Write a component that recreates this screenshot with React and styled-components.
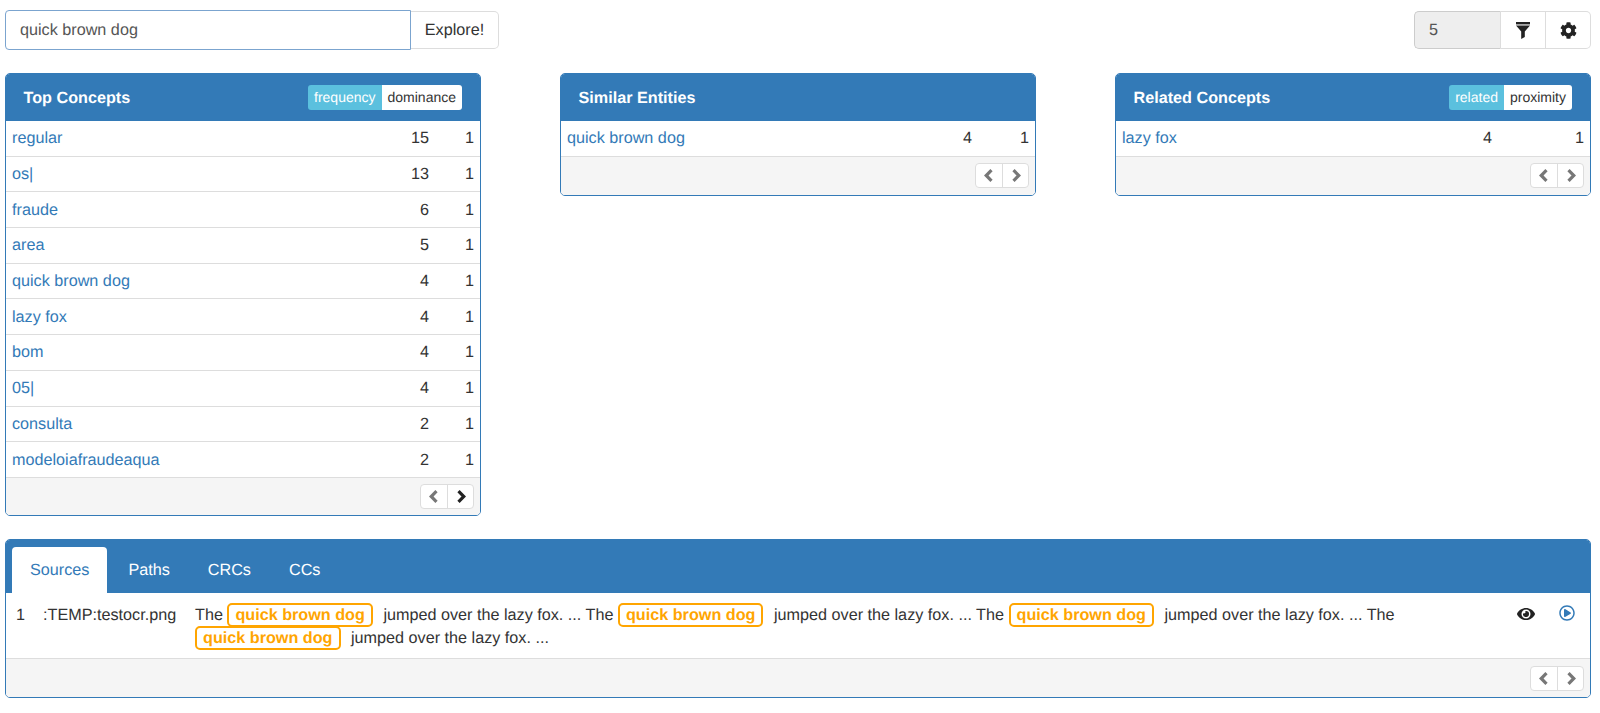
import React from "react";
import styled, { createGlobalStyle } from "styled-components";
import { FaCog, FaEye, FaRegPlayCircle } from "react-icons/fa";

const Global = createGlobalStyle`
  html, body { margin: 0; padding: 0; background: #fff; }
  body {
    font-family: "Liberation Sans", Arial, sans-serif;
    font-size: 16.2px;
    line-height: 23px;
    color: #333;
    text-rendering: geometricPrecision;
  }
  * { box-sizing: border-box; }
`;

const Page = styled.div`
  width: 1600px;
  height: 713px;
  padding: 10px 9px 0 5px;
  overflow: hidden;
`;
const Toolbar = styled.div`
  display: flex;
  justify-content: space-between;
  align-items: center;
  height: 40px;
`;
const SearchGroup = styled.div`
  display: flex;
  align-items: center;
  width: 494px;
`;
const SearchInput = styled.div`
  flex: 1;
  height: 40px;
  border: 1px solid #7ba4cf;
  border-radius: 4px 0 0 4px;
  padding: 8px 14px;
  color: #555;
`;
const GroupBtn = styled.div`
  height: 38px;
  display: flex;
  align-items: center;
  justify-content: center;
  width: ${(p) => p.$w}px;
  border: 1px solid #ddd;
  border-left: 0;
  border-radius: ${(p) => (p.$end ? "0 5px 5px 0" : "0")};
  background: #fff;
  color: #333;
`;
const NumGroup = styled.div`
  display: flex;
  align-items: center;
`;
const NumInput = styled.div`
  width: 87px;
  height: 38px;
  background: #eee;
  border: 1px solid #ccc;
  border-right: 1px solid #ddd;
  border-radius: 5px 0 0 5px;
  padding: 7px 14px;
  color: #555;
`;
const GearIcon = styled(FaCog)`
  font-size: 17px;
  color: #222;
`;
const Columns = styled.div`
  display: grid;
  grid-template-columns: repeat(3, 476px);
  justify-content: space-between;
  align-items: start;
  margin-top: 23px;
  height: 443px;
`;
const Panel = styled.div`
  border: 1px solid #337ab7;
  border-radius: 5px;
  overflow: hidden;
  background: #fff;
`;
const PanelHead = styled.div`
  height: 47px;
  background: #337ab7;
  display: flex;
  align-items: center;
  justify-content: space-between;
  padding: 0 18px 0 17.5px;
`;
const PanelTitle = styled.div`
  color: #fff;
  font-weight: 700;
  padding-top: 1px;
`;
const Toggle = styled.div`
  display: flex;
  height: 25px;
  border-radius: 3px;
  overflow: hidden;
  font-size: 14px;
  line-height: 25px;
`;
const ToggleItem = styled.div`
  padding: 0 6px;
  background: ${(p) => (p.$on ? "#5bc0de" : "#fff")};
  color: ${(p) => (p.$on ? "#fff" : "#333")};
`;
const Row = styled.div`
  display: flex;
  align-items: center;
  height: 35.7px;
  padding: 1px 6px 0;
  border-bottom: 1px solid #ddd;
`;
const Name = styled.a`
  flex: 1;
  color: #337ab7;
`;
const Freq = styled.span`
  text-align: right;
`;
const Dom = styled.span`
  width: ${(p) => p.$w}px;
  text-align: right;
`;
const PanelFoot = styled.div`
  height: ${(p) => p.$h}px;
  background: #f5f5f5;
  display: flex;
  justify-content: flex-end;
  align-items: center;
  padding-right: 6px;
`;
const Pager = styled.div`
  display: flex;
  height: 25px;
  border: 1px solid #ddd;
  border-radius: 4px;
  background: #fff;
`;
const PagerBtn = styled.div`
  width: 26px;
  display: flex;
  align-items: center;
  justify-content: center;
  color: ${(p) => (p.$active ? "#222" : "#777")};
  & + & { border-left: 1px solid #ddd; }
`;
const Bottom = styled(Panel)`
  margin-top: 23px;
`;
const TabBar = styled.div`
  height: 53px;
  background: #337ab7;
  padding: 7px 6px 0;
  display: flex;
`;
const Tab = styled.div`
  height: 46px;
  padding: 12px 18px 0;
  margin-right: ${(p) => (p.$active ? 3 : 2)}px;
  border-radius: 4px 4px 0 0;
  background: ${(p) => (p.$active ? "#fff" : "transparent")};
  color: ${(p) => (p.$active ? "#337ab7" : "#fff")};
`;
const SourceRow = styled.div`
  display: flex;
  height: 66px;
  padding: 11px 0 0 10px;
  border-bottom: 1px solid #ddd;
`;
const Index = styled.div`
  width: 27px;
`;
const File = styled.div`
  width: 152px;
`;
const Snippet = styled.div`
  width: 1210px;
  line-height: 22.7px;
`;
const Highlight = styled.span`
  color: orange;
  font-weight: 700;
  border: 2px solid orange;
  border-radius: 5px;
  padding: 1px 6px;
  margin-right: 6px;
`;
const Actions = styled.div`
  margin-left: auto;
  display: flex;
  gap: 24px;
  padding-right: 15px;
  align-items: flex-start;
  height: 23px;
`;
const IconSlot = styled.span`
  display: flex;
  color: ${(p) => p.$color};
  font-size: ${(p) => p.$size}px;
  margin-top: 1px;
`;

const FilterIcon = () => (
  <svg width="14" height="17" viewBox="0 0 14 17" fill="#222">
    <rect x="0" y="0" width="14" height="2.4" />
    <path d="M0 3.6h14L8.8 9.4V15L5.2 17V9.4z" />
  </svg>
);

const Chevron = ({ right }) => (
  <svg width="10" height="13" viewBox="0 0 10 13" fill="none" stroke="currentColor" strokeWidth="3.2">
    <path d={right ? "M2.5 1.2 7.8 6.5 2.5 11.8" : "M7.5 1.2 2.2 6.5 7.5 11.8"} />
  </svg>
);

const PagerControl = ({ active }) => (
  <Pager>
    <PagerBtn><Chevron /></PagerBtn>
    <PagerBtn $active={active}><Chevron right /></PagerBtn>
  </Pager>
);

const top = [
  ["regular", 15], ["os|", 13], ["fraude", 6], ["area", 5], ["quick brown dog", 4],
  ["lazy fox", 4], ["bom", 4], ["05|", 4], ["consulta", 2], ["modeloiafraudeaqua", 2],
];

const Rows = ({ items, gap }) =>
  items.map(([n, f]) => (
    <Row key={n}>
      <Name>{n}</Name>
      <Freq>{f}</Freq>
      <Dom $w={gap}>1</Dom>
    </Row>
  ));

export default function App() {
  return (
    <Page>
      <Global />
      <Toolbar>
        <SearchGroup>
          <SearchInput>quick brown dog</SearchInput>
          <GroupBtn $w={88} $end>Explore!</GroupBtn>
        </SearchGroup>
        <NumGroup>
          <NumInput>5</NumInput>
          <GroupBtn $w={45}><FilterIcon /></GroupBtn>
          <GroupBtn $w={45} $end><GearIcon /></GroupBtn>
        </NumGroup>
      </Toolbar>
      <Columns>
        <Panel>
          <PanelHead>
            <PanelTitle>Top Concepts</PanelTitle>
            <Toggle>
              <ToggleItem $on>frequency</ToggleItem>
              <ToggleItem>dominance</ToggleItem>
            </Toggle>
          </PanelHead>
          <Rows items={top} gap={45} />
          <PanelFoot $h={37}><PagerControl active /></PanelFoot>
        </Panel>
        <Panel>
          <PanelHead>
            <PanelTitle>Similar Entities</PanelTitle>
          </PanelHead>
          <Rows items={[["quick brown dog", 4]]} gap={57} />
          <PanelFoot $h={38}><PagerControl /></PanelFoot>
        </Panel>
        <Panel>
          <PanelHead>
            <PanelTitle>Related Concepts</PanelTitle>
            <Toggle>
              <ToggleItem $on>related</ToggleItem>
              <ToggleItem>proximity</ToggleItem>
            </Toggle>
          </PanelHead>
          <Rows items={[["lazy fox", 4]]} gap={92} />
          <PanelFoot $h={38}><PagerControl /></PanelFoot>
        </Panel>
      </Columns>
      <Bottom>
        <TabBar>
          <Tab $active>Sources</Tab>
          <Tab>Paths</Tab>
          <Tab>CRCs</Tab>
          <Tab>CCs</Tab>
        </TabBar>
        <SourceRow>
          <Index>1</Index>
          <File>:TEMP:testocr.png</File>
          <Snippet>
            The <Highlight>quick brown dog</Highlight> jumped over the lazy fox. ... The <Highlight>quick brown dog</Highlight> jumped over the lazy fox. ... The <Highlight>quick brown dog</Highlight> jumped over the lazy fox. ... The <Highlight>quick brown dog</Highlight> jumped over the lazy fox. ...
          </Snippet>
          <Actions>
            <IconSlot $color="#222" $size={18}><FaEye /></IconSlot>
            <IconSlot $color="#337ab7" $size={16}><FaRegPlayCircle /></IconSlot>
          </Actions>
        </SourceRow>
        <PanelFoot $h={38}><PagerControl /></PanelFoot>
      </Bottom>
    </Page>
  );
}
